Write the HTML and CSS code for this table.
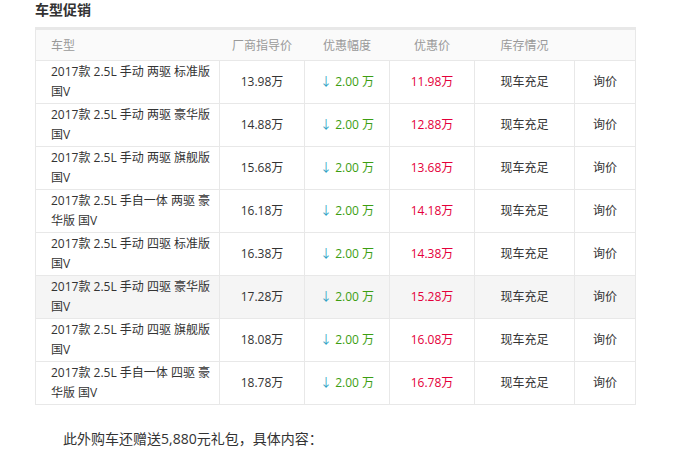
FILE: index.html
```html
<!DOCTYPE html>
<html lang="zh-CN">
<head>
<meta charset="utf-8">
<link rel="stylesheet" href="styles.css">
</head>
<body>
<div class="wrap">
  <h3 class="title">车型促销</h3>
  <table class="promo">
    <colgroup>
      <col class="c1"><col class="c2"><col class="c3"><col class="c4"><col class="c5"><col class="c6">
    </colgroup>
    <thead>
      <tr><th class="left">车型</th><th>厂商指导价</th><th>优惠幅度</th><th>优惠价</th><th>库存情况</th><th></th></tr>
    </thead>
    <tbody>
      <tr><td class="left">2017款 2.5L 手动 两驱 标准版国V</td><td>13.98万</td><td class="off"><span class="arr">↓</span> 2.00 万</td><td class="now">11.98万</td><td>现车充足</td><td>询价</td></tr>
      <tr><td class="left">2017款 2.5L 手动 两驱 豪华版国V</td><td>14.88万</td><td class="off"><span class="arr">↓</span> 2.00 万</td><td class="now">12.88万</td><td>现车充足</td><td>询价</td></tr>
      <tr><td class="left">2017款 2.5L 手动 两驱 旗舰版国V</td><td>15.68万</td><td class="off"><span class="arr">↓</span> 2.00 万</td><td class="now">13.68万</td><td>现车充足</td><td>询价</td></tr>
      <tr><td class="left">2017款 2.5L 手自一体 两驱 豪华版 国V</td><td>16.18万</td><td class="off"><span class="arr">↓</span> 2.00 万</td><td class="now">14.18万</td><td>现车充足</td><td>询价</td></tr>
      <tr><td class="left">2017款 2.5L 手动 四驱 标准版国V</td><td>16.38万</td><td class="off"><span class="arr">↓</span> 2.00 万</td><td class="now">14.38万</td><td>现车充足</td><td>询价</td></tr>
      <tr class="hover"><td class="left">2017款 2.5L 手动 四驱 豪华版国V</td><td>17.28万</td><td class="off"><span class="arr">↓</span> 2.00 万</td><td class="now">15.28万</td><td>现车充足</td><td>询价</td></tr>
      <tr><td class="left">2017款 2.5L 手动 四驱 旗舰版国V</td><td>18.08万</td><td class="off"><span class="arr">↓</span> 2.00 万</td><td class="now">16.08万</td><td>现车充足</td><td>询价</td></tr>
      <tr><td class="left">2017款 2.5L 手自一体 四驱 豪华版 国V</td><td>18.78万</td><td class="off"><span class="arr">↓</span> 2.00 万</td><td class="now">16.78万</td><td>现车充足</td><td>询价</td></tr>
    </tbody>
  </table>
  <p class="note">此外购车还赠送5,880元礼包，具体内容：</p>
</div>
</body>
</html>
```
FILE: styles.css
```css
html, body {
  margin: 0;
  padding: 0;
  background: #fff;
}
body {
  font-family: "Open Sans", "Noto Sans CJK SC", sans-serif;
  color: #333;
}
.wrap {
  padding-left: 35px;
  width: 600px;
}
.title {
  margin: 0;
  padding-top: 1px;
  font-size: 14px;
  line-height: 18px;
  font-weight: bold;
  color: #333;
  height: 26px;
}
.promo {
  border-collapse: collapse;
  table-layout: fixed;
  width: 600px;
  font-size: 12px;
  border: 1px solid #e8e8e8;
}
.c1 { width: 184px; }
.c2 { width: 85px; }
.c3 { width: 85px; }
.c4 { width: 85px; }
.c5 { width: 100px; }
.c6 { width: 61px; }
.promo th {
  background: #fafafa;
  border-top: 3px solid #e8e8e8;
  border-bottom: 1px solid #e8e8e8;
  color: #999;
  font-weight: normal;
  height: 30px;
  padding: 0;
  text-align: center;
}
.promo td {
  border: 1px solid #e8e8e8;
  height: 43px;
  padding: 0;
  text-align: center;
  line-height: 20px;
  box-sizing: border-box;
}
.promo .left {
  text-align: left;
  padding-left: 15px;
  padding-right: 1px;
}
.promo tr.hover td {
  background: #f5f5f5;
}
.off {
  color: #3c9e12;
}
.arr {
  color: #2e9fc4;
}
.now {
  color: #e4003a;
}
.note {
  margin: 24px 0 0;
  font-size: 14px;
  line-height: 20px;
  text-indent: 2em;
  color: #333;
}
```
